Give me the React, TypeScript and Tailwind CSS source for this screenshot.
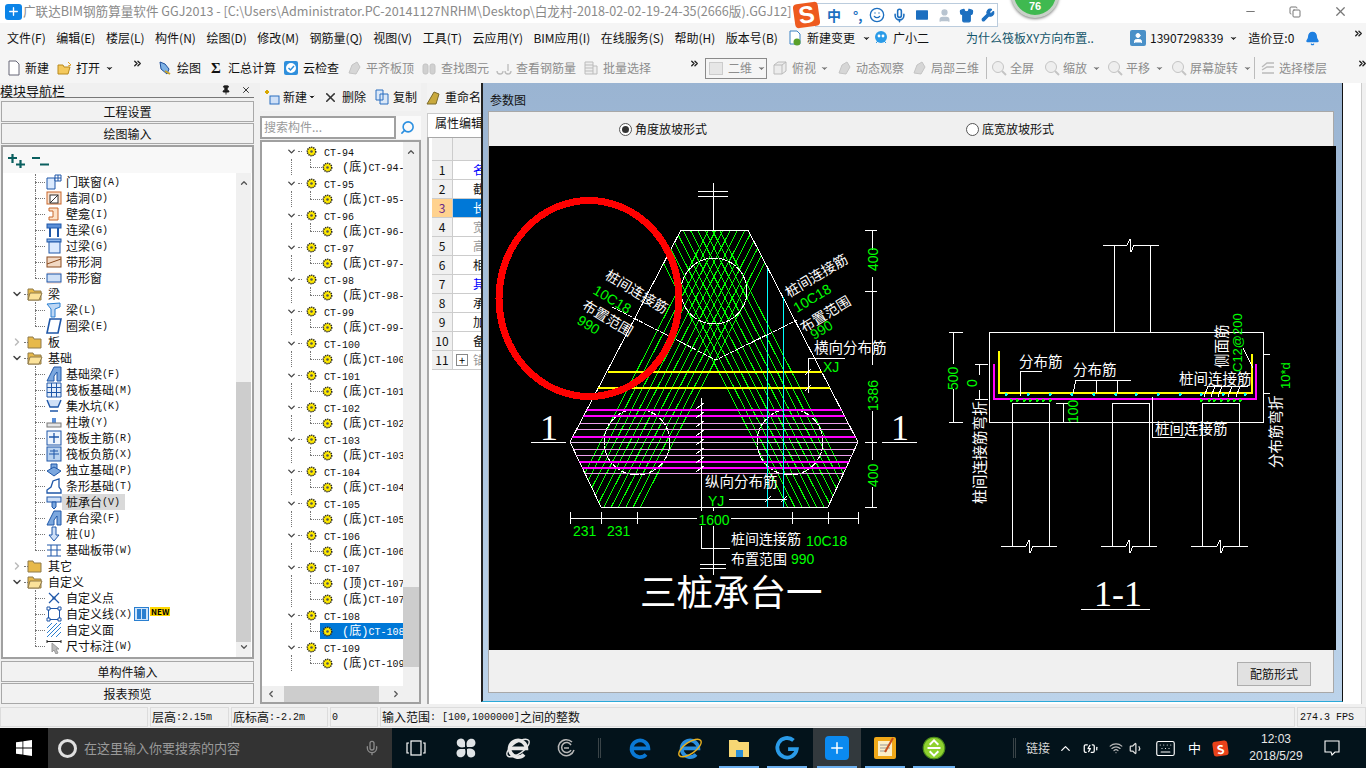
import React from 'react';
import {
  BatteryCharging, Bell, ChevronDown, ChevronRight, ChevronUp, ChevronsRight, Copy, Keyboard, Mic, Minus, Pin, Plus,
  Search, Shirt, Smile, User, Volume1, Wifi, Wrench, X,
} from 'lucide-react';

const UI_FONT = "font-['Noto_Sans_CJK_SC','Liberation_Sans',sans-serif]";

// narrow latin next to 12px hanzi, like the bitmap song face of the app
const Mixed: React.FC<{ text: string }> = ({ text }) => (
  <>
    {text.split(/([\x00-\x7f]+)/).filter(Boolean).map((part, i) =>
      /^[\x00-\x7f]+$/.test(part) ? (
        <span key={i} className="font-['Liberation_Mono',monospace] text-[10px]">{part}</span>
      ) : (
        <span key={i}>{part}</span>
      ),
    )}
  </>
);

const Ico: React.FC<{ children: React.ReactNode; className?: string }> = ({ children, className }) => (
  <svg viewBox="0 0 16 16" width="16" height="16" className={`shrink-0 ${className ?? ''}`}>
    {children}
  </svg>
);

/* ---------- top bars ---------- */

const TitleBar = () => (
  <div className="flex h-[23px] items-center bg-white pl-[5px] text-[12.6px] text-[#8a8a8a]">
    <span className="mr-[1px] flex h-[16px] w-[17px] items-center justify-center rounded-[3px] bg-[#0b84e8]">
      <Plus size={13} color="#fff" strokeWidth={2.5} />
    </span>
    <span className="whitespace-nowrap">
      广联达BIM钢筋算量软件 GGJ2013 - [C:\Users\Administrator.PC-20141127NRHM\Desktop\白龙村-2018-02-02-19-24-35(2666版).GGJ12]
    </span>
    <div className="ml-auto flex items-center gap-[32px] pr-[18px]">
      <Minus size={13} color="#777" />
      <Copy size={12} color="#777" />
      <X size={15} color="#777" />
    </div>
  </div>
);

const menus = ['文件(F)', '编辑(E)', '楼层(L)', '构件(N)', '绘图(D)', '修改(M)', '钢筋量(Q)', '视图(V)', '工具(T)', '云应用(Y)', 'BIM应用(I)', '在线服务(S)', '帮助(H)', '版本号(B)'];

const MenuBar = () => (
  <div className="flex h-[30px] items-center bg-[#f5f5f5] pl-[7px] text-[12px] text-[#111]">
    <div className="flex w-[773px] shrink-0 items-center gap-[10.5px] whitespace-nowrap">
      {menus.map((m) => (
        <span key={m}>{m}</span>
      ))}
    </div>
    <div className="ml-[7px] flex shrink-0 items-center gap-[4px]">
      <Ico>
        <path d="M3 1h7l3 3v10H3z" fill="#fff" stroke="#3b82c4" />
        <circle cx="10" cy="12" r="3.5" fill="#5aa02c" />
      </Ico>
      <span>新建变更</span>
      <ChevronDown size={9} fill="#333" className="ml-[3px]" />
    </div>
    <div className="ml-[2px] flex shrink-0 items-center gap-[4px]">
      <Ico>
        <circle cx="8" cy="7" r="6" fill="#2a9be8" />
        <circle cx="6" cy="6" r="1.4" fill="#fff" />
        <circle cx="10" cy="6" r="1.4" fill="#fff" />
        <path d="M3 13l2-2h6l2 2" stroke="#2a9be8" fill="none" />
      </Ico>
      <span>广小二</span>
    </div>
    <span className="ml-[37px] w-[128px] shrink-0 whitespace-nowrap text-[#14566b]">为什么筏板XY方向布置..</span>
    <div className="ml-[36px] flex shrink-0 items-center">
      <span className="flex h-[16px] w-[16px] items-center justify-center rounded-[2px] bg-[#4a90c8]">
        <User size={12} color="#fff" fill="#fff" />
      </span>
      <span className="ml-[4px]">13907298339</span>
      <ChevronDown size={9} fill="#333" className="ml-[6px]" />
      <span className="ml-[10px]">造价豆:0</span>
      <Bell size={15} color="#1e7fe0" fill="#1e7fe0" className="ml-[11px]" />
      <ChevronsRight size={11} color="#222" strokeWidth={3} className="ml-[33px] -mt-[10px]" />
    </div>
  </div>
);

type Tool = { label: string; icon: React.ReactNode; off?: boolean; drop?: boolean };
const grey = '#c4c4c4';
const GreyBlob = () => (
  <Ico>
    <path d="M3 13l3-8 5-3 3 5-4 7z" fill="#d6d6d6" stroke={grey} />
  </Ico>
);

const tools1: Tool[] = [
  {
    label: '绘图',
    icon: (
      <Ico>
        <path d="M3 2l5 2 4 5-2 5-6-5z" fill="#7fb2e5" stroke="#1f4f9c" />
        <path d="M8 11l5 3" stroke="#c9a227" strokeWidth="2" />
      </Ico>
    ),
  },
  { label: '汇总计算', icon: <span className="w-[16px] text-center font-['Liberation_Serif',serif] text-[15px] font-bold leading-none">Σ</span> },
  {
    label: '云检查',
    icon: (
      <Ico>
        <rect x="1" y="1" width="14" height="14" rx="2" fill="#2f8fdc" />
        <circle cx="8" cy="8" r="5" fill="#fff" />
        <path d="M5.5 8l2 2 3.5-4" stroke="#2f8fdc" strokeWidth="1.5" fill="none" />
      </Ico>
    ),
  },
  { label: '平齐板顶', off: true, icon: <GreyBlob /> },
  {
    label: '查找图元',
    off: true,
    icon: (
      <Ico>
        <rect x="2" y="4" width="5" height="10" rx="2" fill="#d0d0d0" stroke={grey} />
        <rect x="9" y="4" width="5" height="10" rx="2" fill="#d0d0d0" stroke={grey} />
      </Ico>
    ),
  },
  {
    label: '查看钢筋量',
    off: true,
    icon: (
      <Ico>
        <path d="M1 11a3 3 0 006 0M9 11a3 3 0 006 0M12 4v7" stroke="#bbb" fill="none" strokeWidth="1.3" />
      </Ico>
    ),
  },
  {
    label: '批量选择',
    off: true,
    icon: (
      <Ico>
        <path d="M2 2h8v12H2zM2 5h8M2 8h8M2 11h8M10 6h4v8h-4" stroke="#bbb" fill="#eee" />
      </Ico>
    ),
  },
];

const tools2: Tool[] = [
  {
    label: '俯视',
    off: true,
    drop: true,
    icon: (
      <Ico>
        <path d="M2 5l4-3h8v9l-4 3H2zM2 5h8v9M10 5l4-3" stroke="#bbb" fill="#ececec" />
      </Ico>
    ),
  },
  { label: '动态观察', off: true, icon: <GreyBlob /> },
  { label: '局部三维', off: true, icon: <GreyBlob /> },
];

const ToolItem: React.FC<{ t: Tool }> = ({ t }) => (
  <div className={`flex shrink-0 items-center gap-[4px] whitespace-nowrap ${t.off ? 'text-[#8d8d8d]' : 'text-[#111]'}`}>
    {t.icon}
    <span>{t.label}</span>
    {t.drop && <ChevronDown size={9} fill="#777" color="#777" />}
  </div>
);

const CircleTool: React.FC<{ label: string; drop?: boolean; className?: string }> = ({ label, drop, className }) => (
  <div className={`flex shrink-0 items-center gap-[3px] whitespace-nowrap text-[#8d8d8d] ${className ?? ''}`}>
    <Ico>
      <circle cx="7" cy="7" r="5.5" fill="#eee" stroke={grey} />
      <path d="M11 11l4 4" stroke={grey} strokeWidth="2" />
    </Ico>
    <span>{label}</span>
    {drop && <ChevronDown size={9} fill="#777" color="#777" className="ml-[2px]" />}
  </div>
);

const Sep = () => <span className="block h-[22px] w-px shrink-0 bg-[#bcbcbc]" />;
const More = ({ className }: { className?: string }) => (
  <ChevronsRight size={11} color="#222" strokeWidth={3} className={`-mt-[10px] shrink-0 ${className ?? ''}`} />
);

const ToolBar = () => (
  <div className="flex h-[30px] items-center bg-[#f5f5f5] pl-[6px] text-[12px]">
    <div className="flex w-[137px] shrink-0 items-center">
      <Ico>
        <path d="M3 1h7l3 3v11H3z" fill="#fff" stroke="#667" />
      </Ico>
      <span className="ml-[3px]">新建</span>
      <Ico className="ml-[8px]">
        <path d="M1 5h5l1 2h6l-2 7H1z" fill="#f4c95d" stroke="#b98a1e" />
        <path d="M11 2l3 3-3 1" stroke="#e0a020" fill="none" />
      </Ico>
      <span className="ml-[3px]">打开</span>
      <ChevronDown size={9} fill="#333" className="ml-[5px]" />
      <More className="ml-auto" />
    </div>
    <div className="ml-[14px] flex w-[532px] shrink-0 items-center gap-[7px]">
      {tools1.map((t) => (
        <ToolItem key={t.label} t={t} />
      ))}
    </div>
    <More />
    <div className="ml-[5px] flex h-[21px] w-[62px] shrink-0 items-center whitespace-nowrap border border-[#8a8a8a] pl-[3px] text-[#8d8d8d]">
      <span className="h-[13px] w-[14px] shrink-0 border border-[#ccc] bg-[#e6e6e6]" />
      <span className="ml-[5px]">二维</span>
      <ChevronDown size={9} fill="#777" color="#777" className="ml-[5px] shrink-0" />
    </div>
    <div className="ml-[5px] flex shrink-0 items-center gap-[7px]">
      {tools2.map((t) => (
        <ToolItem key={t.label} t={t} />
      ))}
      <Sep />
    </div>
    <CircleTool label="全屏" className="ml-[4px]" />
    <CircleTool label="缩放" drop className="ml-[10px]" />
    <CircleTool label="平移" drop className="ml-[6px]" />
    <CircleTool label="屏幕旋转" drop className="ml-[7px]" />
    <span className="ml-[2px]">
      <Sep />
    </span>
    <div className="ml-[5px] flex shrink-0 items-center gap-[3px] whitespace-nowrap text-[#8d8d8d]">
      <Ico>
        <path d="M2 7l5-4h7M2 10l5-3h7M2 13h12" stroke="#bbb" fill="none" strokeWidth="1.4" />
      </Ico>
      <span>选择楼层</span>
    </div>
    <More className="ml-[30px]" />
  </div>
);

/* ---------- module tree ---------- */

const NavIcon: React.FC<{ kind: string }> = ({ kind }) => {
  const b = '#1f57a8';
  const o = '#c8662a';
  switch (kind) {
    case 'door':
      return <Ico><path d="M1 4h8v11H1z" fill="#dbeafe" stroke={b} /><path d="M9 1h6v6H9zM12 1v6M9 4h6" stroke={b} fill="#fff" /></Ico>;
    case 'hole':
      return <Ico><rect x="1" y="2" width="14" height="12" fill="#fbe3d0" stroke={o} /><rect x="4" y="5" width="8" height="8" fill="#fff" stroke="#333" /><path d="M4 13l8-8" stroke="#333" /></Ico>;
    case 'niche':
      return <Ico><path d="M3 2h9v12H3v-3h4V5H3z" fill="#fde2c8" stroke={o} /></Ico>;
    case 'lintel':
      return <Ico><rect x="1" y="2" width="14" height="4" fill="#5b8fd8" stroke={b} /><path d="M4 6v9M12 6v9" stroke={b} strokeWidth="2" /></Ico>;
    case 'over':
      return <Ico><rect x="1" y="1" width="14" height="3" fill="#8db6ea" stroke={b} /><rect x="3" y="4" width="11" height="11" fill="#dbeafe" stroke={b} /></Ico>;
    case 'band':
      return <Ico><rect x="1" y="3" width="14" height="10" fill="#f2d9c4" stroke="#8a4a1e" /><path d="M1 10l14-5" stroke="#8a4a1e" /></Ico>;
    case 'bandw':
      return <Ico><rect x="1" y="2" width="14" height="12" fill="#fde7dc" /><rect x="1" y="4" width="14" height="8" fill="#cfe0f7" stroke={b} /></Ico>;
    case 'beam':
      return <Ico><path d="M1 2l13-1v4L9 7v8H5V7z" fill="#bcd6f4" stroke="#2a7fd0" /></Ico>;
    case 'ring':
      return <Ico><path d="M4 1h11l-3 14H1z" fill="#fff" stroke={b} strokeWidth="1.6" /></Ico>;
    case 'fbeam':
      return <Ico><path d="M1 15l3-6 4-8h7v14h-4V6L8 10v5z" fill="#7ba7de" stroke={b} /></Ico>;
    case 'raft':
      return <Ico><path d="M1 1h14v14H1zM1 5.5h14M1 10.5h14M5.5 1v14M10.5 1v14" stroke={b} fill="#e2edfb" /></Ico>;
    case 'sump':
      return <Ico><path d="M1 2l3 7h8l3-7M4 13h8" stroke={b} fill="#cfe0f7" strokeWidth="1.4" /></Ico>;
    case 'pier':
      return <Ico><path d="M6 4h4v5H6z" fill="#5b8fd8" /><rect x="1" y="9" width="14" height="4" fill="#e5e5e5" stroke="#777" /></Ico>;
    case 'main':
      return <Ico><rect x="1" y="1" width="14" height="14" fill="#eef4fc" stroke={b} /><path d="M3 7h10M8 3v10" stroke={b} strokeWidth="1.3" /></Ico>;
    case 'neg':
      return <Ico><rect x="1" y="1" width="14" height="14" fill="#b9d2f0" stroke={b} /><path d="M3 8h10M8 3v10M4 5h8" stroke={b} /></Ico>;
    case 'iso':
      return <Ico><path d="M1 9l7-4 7 4-7 5zM5 7V2h6v5" fill="#7ba7de" stroke={b} /></Ico>;
    case 'strip':
      return <Ico><path d="M1 15v-3l4-3 2-6 6-2v8l2 3v3z" fill="#fff" stroke={b} strokeWidth="1.3" /></Ico>;
    case 'cap':
      return <Ico><rect x="1" y="3" width="14" height="5" fill="#cfe0f7" stroke={b} /><path d="M6 8h4v5l-2 2-2-2z" fill="#7ba7de" stroke={b} /></Ico>;
    case 'pile':
      return <Ico><path d="M6 1h4v8h3l-5 6-5-6h3z" fill="#cfe0f7" stroke={b} /></Ico>;
    case 'plate':
      return <Ico><path d="M1 3h14M1 14h14M5 3v11M11 3v11M1 8h14" stroke={b} fill="none" /></Ico>;
    case 'point':
      return <Ico><path d="M3 3l10 10M13 3L3 13" stroke={b} strokeWidth="1.2" /><circle cx="8" cy="8" r="1.6" fill={b} /></Ico>;
    case 'line':
      return <Ico><rect x="2.5" y="2.5" width="11" height="11" fill="none" stroke={b} /><path d="M1 1h3v3H1zM12 1h3v3h-3zM1 12h3v3H1zM12 12h3v3h-3z" fill="#fff" stroke={b} /></Ico>;
    case 'face':
      return <Ico><path d="M1 6l5-5M1 11L11 1M1 15L15 1M5 15L15 5M10 15l5-5" stroke="#2a7fd0" /></Ico>;
    default:
      return <Ico><path d="M1 2v3M15 2v3M1 3.5h14" stroke="#222" /><path d="M6 5l7 6-3 0 2 4-2 1-2-4-2 2z" fill="#bbb" stroke="#999" /></Ico>;
  }
};

const Folder: React.FC<{ open?: boolean }> = ({ open }) => (
  <Ico>
    <path d="M1 3h5l1 2h7v9H1z" fill="#e7b94a" stroke="#8f7a4a" />
    {open && <path d="M3 7h12l-3 7H1z" fill="#fbe29a" stroke="#8f7a4a" />}
  </Ico>
);

type NavRow = { label: string; icon?: string; group?: 'open' | 'closed'; last?: boolean; hot?: boolean; isNew?: boolean };
const navRows: NavRow[] = [
  { label: '门联窗(A)', icon: 'door' },
  { label: '墙洞(D)', icon: 'hole' },
  { label: '壁龛(I)', icon: 'niche' },
  { label: '连梁(G)', icon: 'lintel' },
  { label: '过梁(G)', icon: 'over' },
  { label: '带形洞', icon: 'band' },
  { label: '带形窗', icon: 'bandw', last: true },
  { label: '梁', group: 'open' },
  { label: '梁(L)', icon: 'beam' },
  { label: '圈梁(E)', icon: 'ring', last: true },
  { label: '板', group: 'closed' },
  { label: '基础', group: 'open' },
  { label: '基础梁(F)', icon: 'fbeam' },
  { label: '筏板基础(M)', icon: 'raft' },
  { label: '集水坑(K)', icon: 'sump' },
  { label: '柱墩(Y)', icon: 'pier' },
  { label: '筏板主筋(R)', icon: 'main' },
  { label: '筏板负筋(X)', icon: 'neg' },
  { label: '独立基础(P)', icon: 'iso' },
  { label: '条形基础(T)', icon: 'strip' },
  { label: '桩承台(V)', icon: 'cap', hot: true },
  { label: '承台梁(F)', icon: 'fbeam' },
  { label: '桩(U)', icon: 'pile' },
  { label: '基础板带(W)', icon: 'plate', last: true },
  { label: '其它', group: 'closed' },
  { label: '自定义', group: 'open' },
  { label: '自定义点', icon: 'point' },
  { label: '自定义线(X)', icon: 'line', isNew: true },
  { label: '自定义面', icon: 'face' },
  { label: '尺寸标注(W)', icon: 'dim', last: true },
];

const Dots = ({ className }: { className: string }) => <span className={`absolute border-dotted border-[#777] ${className}`} />;

const NavTree = () => (
  <div className="relative flex min-h-0 flex-1 border-2 border-[#a0a0a0] border-t-0 bg-white">
    <div className="min-w-0 flex-1 pt-[1px]">
      {navRows.map((r) =>
        r.group ? (
          <div key={r.label} className="relative flex h-[16px] items-center pl-[8px] text-[12px]">
            {r.group === 'open' ? <ChevronDown size={12} color="#444" strokeWidth={3} /> : <ChevronRight size={12} color="#bbb" strokeWidth={3} />}
            <Dots className="left-[21px] top-[8px] w-[4px] border-t" />
            <span className="ml-[4px]"><Folder open={r.group === 'open'} /></span>
            <span className="ml-[5px]">{r.label}</span>
          </div>
        ) : (
          <div key={r.label} className="relative flex h-[16px] items-center pl-[43px] text-[12px]">
            <Dots className={`left-[32px] top-0 border-l ${r.last ? 'h-[8px]' : 'h-[16px]'}`} />
            <Dots className="left-[32px] top-[8px] w-[10px] border-t" />
            <NavIcon kind={r.icon ?? ''} />
            <span className={`flex h-[16px] items-center whitespace-nowrap pl-[4px] pr-[5px] ${r.hot ? 'bg-[#d9d9d9]' : ''}`}>
              <Mixed text={r.label} />
            </span>
            {r.isNew && (
              <>
                <span className="-ml-[3px] flex h-[14px] w-[15px] items-center justify-around border border-[#2a7fd0] bg-[#cfe4fa] px-[1px]">
                  <span className="h-[10px] w-[4px] bg-[#2a7fd0]" />
                  <span className="h-[10px] w-[4px] bg-[#2a7fd0]" />
                </span>
                <span className="-mt-[5px] ml-[1px] bg-[#ffd800] px-[1px] text-[8px] font-bold leading-[9px] text-black">NEW</span>
              </>
            )}
          </div>
        ),
      )}
    </div>
    <div className="mr-[1px] flex w-[15px] flex-col items-center bg-[#f0f0f0]">
      <ChevronUp size={10} strokeWidth={3} color="#555" className="my-[5px]" />
      <div className="mt-[189px] h-[260px] w-full bg-[#cdcdcd]" />
      <ChevronDown size={10} strokeWidth={3} color="#555" className="mb-[5px] mt-auto" />
    </div>
  </div>
);

const PanelButton: React.FC<{ label: string }> = ({ label }) => (
  <div className="flex h-[21px] items-center justify-center border border-[#a8a8a8] bg-[#f2f2f2] text-[12px] text-[#111]">{label}</div>
);

const NavPanel = () => (
  <div className="ml-[1px] flex w-[253px] shrink-0 flex-col">
    <div className="flex h-[15px] items-center border-b border-[#777] text-[13px] leading-none">
      <span className="-ml-[1px]">模块导航栏</span>
      <Pin size={10} className="ml-auto" fill="#222" />
      <X size={10} className="ml-[10px] mr-[3px]" />
    </div>
    <div className="mt-[3px] flex flex-col gap-px">
      <PanelButton label="工程设置" />
      <PanelButton label="绘图输入" />
    </div>
    <div className="mt-[1px] flex h-[28px] items-center gap-[7px] border-x-2 border-t-2 border-[#a0a0a0] bg-[#f8f8f8] pl-[5px] pt-[2px]">
      <svg viewBox="0 0 17 14" width="17" height="14">
        <path d="M0 4h9M4.5 0v9M8 10.5h9M12.5 6v8" stroke="#0a5f5f" strokeWidth="2.2" />
      </svg>
      <svg viewBox="0 0 17 14" width="17" height="14">
        <path d="M0 4h8M8 10.5h9" stroke="#0a5f5f" strokeWidth="2.2" />
      </svg>
    </div>
    <NavTree />
    <div className="mt-[2px] flex flex-col gap-px">
      <PanelButton label="单构件输入" />
      <PanelButton label="报表预览" />
    </div>
  </div>
);

/* ---------- component list ---------- */

const Gear = () => (
  <svg viewBox="0 0 12 12" width="11" height="11" className="shrink-0">
    <circle cx="6" cy="6" r="4.6" fill="#ffea00" stroke="#222" strokeWidth="1.6" strokeDasharray="1.4 0.9" />
    <circle cx="6" cy="6" r="1.4" fill="#555" />
  </svg>
);

const ctRows: { name: string; sub: string[] }[] = [94, 95, 96, 97, 98, 99, 100, 101, 102, 103, 104, 105, 106, 107, 108, 109].map((n) => ({
  name: `CT-${n}`,
  sub: n === 107 ? [`(顶)CT-${n}`, `(底)CT-${n}`] : [`(底)CT-${n}${n < 100 ? '-' : ''}`],
}));

const CtList = () => (
  <div className="relative flex min-h-0 flex-1 overflow-hidden border-2 border-[#a0a0a0] bg-white">
    <div className="min-w-0 flex-1 overflow-hidden pt-[1px]">
      {ctRows.map((c) => (
        <React.Fragment key={c.name}>
          <div className="relative flex h-[16px] items-center pl-[24px]">
            <ChevronDown size={11} strokeWidth={3} color="#444" />
            <Dots className="left-[36px] top-[8px] w-[4px] border-t" />
            <span className="ml-[9px]"><Gear /></span>
            <span className="ml-[7px] whitespace-nowrap"><Mixed text={c.name} /></span>
          </div>
          {c.sub.map((s) => (
            <div key={s} className="relative flex h-[16px] items-center pl-[58px]">
              <Dots className="left-[29px] top-0 h-[16px] border-l" />
              <Dots className="left-[48px] top-0 h-[8px] border-l" />
              <Dots className="left-[48px] top-[8px] w-[12px] border-t" />
              <div className={`flex h-[16px] w-[83px] items-center overflow-hidden whitespace-nowrap pl-[2px] ${s === '(底)CT-108' ? 'bg-[#0078d7] text-white' : ''}`}>
                <Gear />
                <span className="ml-[9px]">
                  <span className="font-['Liberation_Mono','Noto_Sans_CJK_SC',monospace] text-[12px]">(</span>
                  {s.slice(1, 2)}
                  <span className="font-['Liberation_Mono','Noto_Sans_CJK_SC',monospace] text-[12px]">)</span>
                  <Mixed text={s.slice(3)} />
                </span>
              </div>
            </div>
          ))}
        </React.Fragment>
      ))}
    </div>
    <div className="absolute right-0 top-0 flex h-[545px] w-[16px] flex-col items-center bg-[#f0f0f0]">
      <ChevronUp size={10} strokeWidth={3} color="#555" className="mt-[5px]" />
      <div className="mt-[430px] h-[80px] w-full bg-[#cdcdcd]" />
    </div>
    <div className="absolute bottom-0 left-0 flex h-[16px] w-full items-center bg-[#f0f0f0] pl-[4px]">
      <ChevronRight size={10} strokeWidth={3} color="#555" className="rotate-180" />
      <div className="ml-[8px] h-full w-[95px] bg-[#cdcdcd]" />
      <ChevronRight size={10} strokeWidth={3} color="#555" className="ml-auto mr-[18px]" />
    </div>
  </div>
);

const CtPanel = () => (
  <div className="relative z-10 ml-[6px] flex w-[161px] shrink-0 flex-col text-[12px]">
    <div className="flex h-[28px] items-center whitespace-nowrap bg-[#f3f3f3] pl-[4px]">
      <Ico>
        <path d="M1 3h4M3 1v4" stroke="#d8a800" strokeWidth="2" />
        <rect x="6" y="7" width="9" height="8" fill="#cfe0f7" stroke="#2a6fc0" />
      </Ico>
      <span className="ml-[3px]">新建</span>
      <ChevronDown size={8} fill="#222" className="ml-[1px] shrink-0" />
      <X size={15} strokeWidth={2.5} color="#333" className="ml-[7px] shrink-0" />
      <span className="ml-[4px]">删除</span>
      <Ico className="ml-[8px]">
        <path d="M2 1h7v10H2zM6 5h8v10H6z" fill="#dbe8f8" stroke="#2a6fc0" />
      </Ico>
      <span className="ml-[3px]">复制</span>
      <Ico className="ml-[8px]">
        <path d="M2 15l7-12 5 2-3 10z" fill="#c9a93d" stroke="#7a6a2a" />
      </Ico>
      <span className="ml-[4px]">重命名</span>
    </div>
    <div className="mt-[3px] flex h-[26px] items-center">
      <div className="flex h-[23px] w-[136px] items-center border-2 border-[#a0a0a0] bg-white pl-[2px] text-[#9a9a9a]">搜索构件...</div>
      <div className="flex h-[23px] flex-1 items-center justify-center bg-[#fafafa]">
        <Search size={15} color="#2a8fe0" strokeWidth={2.5} className="mr-[3px] -scale-x-100" />
      </div>
    </div>
    <CtList />
  </div>
);

/* ---------- property grid (mostly under the dialog) ---------- */

const props: { n: number; t: string; c?: string; on?: boolean; plus?: boolean }[] = [
  { n: 1, t: '名', c: 'text-[#0000ff]' },
  { n: 2, t: '截' },
  { n: 3, t: '长', on: true },
  { n: 4, t: '宽', c: 'text-[#999]' },
  { n: 5, t: '高', c: 'text-[#999]' },
  { n: 6, t: '相' },
  { n: 7, t: '其', c: 'text-[#0000ff]' },
  { n: 8, t: '承' },
  { n: 9, t: '加' },
  { n: 10, t: '备' },
  { n: 11, t: '锚', c: 'text-[#999]', plus: true },
];

const PropPanel = () => (
  <div className="ml-[6px] mr-[4px] flex min-w-0 flex-1 flex-col border-r border-[#ccc] bg-white">
    <div className="h-[30px] w-[60px] bg-[#f3f3f3]" />
    <div className="flex h-[24px] w-[70px] items-start border-l border-t border-[#ccc] bg-white pl-[7px] text-[12px]">属性编辑</div>
    <div className="w-[850px] flex-1 border-l-2 border-t border-[#a8a8a8] bg-white pl-[3px]">
      <div className="flex h-[23px] border-b border-[#ccc] bg-[#f0f0f0]">
        <span className="w-[21px] border-r border-[#ccc]" />
      </div>
      {props.map((p) => (
        <div key={p.n} className="flex h-[19px] border-b border-[#ccc] text-[12px]">
          <span className={`flex w-[21px] items-center justify-center border-r border-[#ccc] ${p.on ? 'bg-[#ffd28f] text-[#6a2a8a]' : 'bg-[#f0f0f0]'}`}>
            {p.n}
          </span>
          <span className={`flex flex-1 items-center pl-[20px] ${p.on ? 'bg-[#0078d7] text-white' : p.c ?? ''}`}>
            {p.plus && <span className="-ml-[17px] mr-[5px] flex h-[12px] w-[12px] items-center justify-center border border-[#888] text-[11px] text-black">+</span>}
            {p.t}
          </span>
        </div>
      ))}
    </div>
  </div>
);

/* ---------- CAD drawing, coordinates are screen pixels ---------- */

const W = '#ffffff';
const G = '#00ff00';

const Cad: React.FC<{ x: number; y: number; size?: number; fill?: string; rot?: number; anchor?: 'start' | 'middle' | 'end'; serif?: boolean; children: string }> = ({
  x, y, size = 14, fill = W, rot, anchor = 'start', serif, children,
}) => (
  <text
    x={x}
    y={y}
    fontSize={size}
    fill={fill}
    textAnchor={anchor}
    fontFamily={
      serif ? "'Liberation Serif',serif" : fill === G ? "'Liberation Sans',sans-serif" : "'Noto Sans CJK SC','Liberation Sans',sans-serif"
    }
    transform={rot ? `rotate(${rot} ${x} ${y})` : undefined}
  >
    {children}
  </text>
);

const Break: React.FC<{ x1: number; x2: number; y: number; at: number }> = ({ x1, x2, y, at }) => (
  <path d={`M${x1} ${y}H${at - 3}L${at} ${y - 6}L${at + 1} ${y + 7}L${at + 4} ${y}H${x2}`} fill="none" stroke={W} />
);

const hatch = Array.from({ length: 11 }, (_, i) => -36.5 + i * 7.3);
const HEX = '681,230 748,230 858,442 828,507 601,507 570,442';

const PileCapDrawing = () => (
  <svg viewBox="489 146 847 504" width="847" height="504" className="block" shapeRendering="crispEdges">
    <defs>
      <clipPath id="hex">
        <polygon points={HEX} />
      </clipPath>
    </defs>
    <rect x="489" y="146" width="847" height="504" fill="#000" />

    {/* plan: strips */}
    <g clipPath="url(#hex)" stroke={G} strokeWidth="1">
      {hatch.map((o) => (
        <React.Fragment key={o}>
          <line x1={745 + o} y1={230} x2={604 + o} y2={507} />
          <line x1={683 - o} y1={230} x2={824 - o} y2={507} />
        </React.Fragment>
      ))}
    </g>
    <polygon points={HEX} fill="none" stroke={W} />
    <g fill="none" stroke={W} strokeDasharray="9 1">
      <circle cx="714" cy="291" r="33" />
      <circle cx="637" cy="442" r="33" />
      <circle cx="790" cy="442" r="33" />
    </g>

    {/* distribution bars */}
    <g clipPath="url(#hex)" strokeWidth="1.5" stroke="#ff00ff">
      {[410, 416, 437, 462, 468].map((y) => (
        <line key={y} x1="560" x2="870" y1={y} y2={y} />
      ))}
      {[423, 429, 449, 455, 473].map((y) => (
        <line key={y} x1="560" x2="870" y1={y} y2={y} strokeWidth="1" stroke="#f0a0f0" />
      ))}
      <line x1="560" x2="870" y1="442" y2="442" strokeWidth="1" stroke="#e8c0f0" />
    </g>
    <path d="M608 372H822M598 388H830" stroke="#ffff00" strokeWidth="1.5" />
    <path d="M767.5 269V507M783.5 297V507" stroke="#00ffff" strokeWidth="1" />

    {/* leaders */}
    <path d="M612 307L716 360L797 320" fill="none" stroke={W} strokeDasharray="5 1" />
    <path d="M713 183V230M698 191H728M698 196H728" fill="none" stroke={W} />
    <path d="M701 398V511M701 526V548H730M713 507V511M713 526V575M700 564H726M700 568H726" fill="none" stroke={W} />
    <g stroke={W}>
      {[406, 415, 424, 433, 442, 451, 460, 469].map((y) => (
        <line key={y} x1="696" y1={y + 3} x2="704" y2={y - 3} />
      ))}
      <line x1="765" y1="502" x2="771" y2="496" />
      <line x1="781" y1="502" x2="787" y2="496" />
      <line x1="805" y1="375" x2="811" y2="369" />
      <line x1="805" y1="391" x2="811" y2="385" />
    </g>
    <path d="M729 499H787M845 358H808V393" fill="none" stroke={W} />

    {/* dimensions */}
    <path d="M872 230V250M872 277V365M872 411V460M872 487V507M865 230H877M865 291H877M865 442H877M865 507H877" fill="none" stroke={W} />
    <path d="M570 518H697M731 518H858" fill="none" stroke={W} />
    {[570, 601, 637, 792, 828, 858].map((x) => (
      <line key={x} x1={x} x2={x} y1="512" y2="524" stroke={W} />
    ))}
    <path d="M531 442H566M882 442H917" stroke={W} />

    <Cad x={878} y={271} size={14} fill={G} rot={-90}>400</Cad>
    <Cad x={878} y={411} size={14} fill={G} rot={-90}>1386</Cad>
    <Cad x={878} y={487} size={14} fill={G} rot={-90}>400</Cad>
    <Cad x={714} y={525} fill={G} anchor="middle">1600</Cad>
    <Cad x={573} y={536} fill={G}>231</Cad>
    <Cad x={607} y={536} fill={G}>231</Cad>
    <Cad x={549} y={440} size={36} serif anchor="middle">1</Cad>
    <Cad x={900} y={440} size={36} serif anchor="middle">1</Cad>

    <Cad x={604} y={278} rot={31}>桩间连接筋</Cad>
    <Cad x={592} y={293} fill={G} rot={31}>10C18</Cad>
    <Cad x={581} y={308} rot={31}>布置范围</Cad>
    <Cad x={576} y={323} fill={G} rot={31}>990</Cad>
    <Cad x={789} y={298} rot={-31}>桩间连接筋</Cad>
    <Cad x={797} y={313} fill={G} rot={-31}>10C18</Cad>
    <Cad x={804} y={333} rot={-31}>布置范围</Cad>
    <Cad x={814} y={340} fill={G} rot={-31}>990</Cad>
    <Cad x={814} y={353} size={14.5}>横向分布筋</Cad>
    <Cad x={823} y={372} fill={G}>XJ</Cad>
    <Cad x={705} y={487} size={14.5}>纵向分布筋</Cad>
    <Cad x={708} y={506} fill={G}>YJ</Cad>
    <Cad x={731} y={544} size={14}>桩间连接筋</Cad>
    <Cad x={806} y={546} fill={G}>10C18</Cad>
    <Cad x={731} y={564} size={14}>布置范围</Cad>
    <Cad x={791} y={564} fill={G}>990</Cad>
    <Cad x={640} y={606} size={36.5}>三桩承台一</Cad>

    {/* section 1-1 */}
    <rect x="989" y="332" width="274" height="90" fill="none" stroke={W} />
    <path d="M1114 245V332M1150 245V332" stroke={W} />
    <Break x1={1103} x2={1159} y={245} at={1130} />
    {[[1012, 1049, 1001, 1057, 1029], [1112, 1149, 1101, 1157, 1129], [1202, 1239, 1191, 1248, 1220]].map(([a, b, c, d, e]) => (
      <React.Fragment key={a}>
        <path d={`M${a} 546V403H${b}V546`} fill="none" stroke={W} />
        <Break x1={c} x2={d} y={546} at={e} />
      </React.Fragment>
    ))}
    <path d="M999 351V393H1252V354" fill="none" stroke="#ffff00" strokeWidth="2" />
    <path d="M994 364V399H1256V364" fill="none" stroke="#ff00ff" strokeWidth="2" />
    {[229, 295, 361, 425, 491, 557, 619, 685, 751, 814, 880, 946].map((z) => (
      <circle key={z} cx={930 + z / 3} cy="394.5" r="1.4" fill="#00ffff" />
    ))}
    {[244, 262, 283, 301, 322, 340, 361, 814, 838, 853, 874, 895, 913, 931].map((z) => (
      <circle key={z} cx={930 + z / 3} cy="400.5" r="1.4" fill={G} />
    ))}
    <path d="M953 332V364M953 389V422M949 332H963M949 422H963M979 364V375M979 390V399M975 364H988M975 399H988M1063 403V422M1056 403H1068M1056 422H1068" fill="none" stroke={W} />
    <path d="M1020 396V371H1042M1073 393L1076 380H1131M1096 380V393M1118 380L1117 393M1152 397V437H1185" fill="none" stroke={W} />
    <path d="M1208 386H1248M1208 386L1204 397M1215 386L1211 397M1222 386L1218 397M1232 386L1228 397M1240 386L1236 397" fill="none" stroke={W} />
    <path d="M1243 348L1253 368M1263 354H1270M1263 393H1270" fill="none" stroke={W} />
    <Cad x={958} y={390} fill={G} rot={-90}>500</Cad>
    <Cad x={977} y={387} fill={G} rot={-90}>0</Cad>
    <Cad x={1078} y={423} fill={G} rot={-90}>100</Cad>
    <Cad x={1019} y={367} size={14.5}>分布筋</Cad>
    <Cad x={1073} y={375} size={14.5}>分布筋</Cad>
    <Cad x={1179} y={384} size={14.5}>桩间连接筋</Cad>
    <Cad x={1155} y={434} size={14.5}>桩间连接筋</Cad>
    <Cad x={985} y={504} size={14.7} rot={-90}>桩间连接筋弯折</Cad>
    <Cad x={1227} y={368} size={14.5} rot={-90}>侧面筋</Cad>
    <Cad x={1242} y={372} size={13} fill={G} rot={-90}>C12@200</Cad>
    <Cad x={1281} y={468} size={14.5} rot={-90}>分布筋弯折</Cad>
    <Cad x={1290} y={389} size={13} fill={G} rot={-90}>10*d</Cad>
    <Cad x={1118} y={606} size={36} serif anchor="middle">1-1</Cad>
    <path d="M1081 609H1150" stroke={W} />

    {/* red hand marking */}
    <ellipse cx="589" cy="298.5" rx="90" ry="98" fill="none" stroke="#ff0000" strokeWidth="7" />
  </svg>
);

const Radio: React.FC<{ on?: boolean; label: string }> = ({ on, label }) => (
  <div className="flex items-center gap-[3px]">
    <span className="flex h-[13px] w-[13px] items-center justify-center rounded-full border border-[#555] bg-white">
      {on && <span className="h-[7px] w-[7px] rounded-full bg-[#333]" />}
    </span>
    <span>{label}</span>
  </div>
);

const ParamDialog = () => (
  <div className="absolute left-[481px] top-[83px] z-20 flex h-[619px] w-[862px] flex-col border-b border-l-2 border-r border-[#222] border-b-[#2aa9d8] border-r-[#111] bg-gradient-to-b from-[#9ab4d2] to-[#bcd3ea] pb-[8px] pl-[5px] pr-[8px] text-[12px]">
    <div className="flex h-[28px] items-center pl-[2px] pt-[6px] text-[#111]">参数图</div>
    <div className="flex min-h-0 flex-1 flex-col border border-[#a8a8a8] bg-[#f0f0f0]">
      <div className="flex h-[34px] shrink-0 items-center pl-[130px]">
        <Radio on label="角度放坡形式" />
        <span className="ml-[259px]">
          <Radio label="底宽放坡形式" />
        </span>
      </div>
      <PileCapDrawing />
      <div className="flex flex-1 items-start justify-end pr-[22px] pt-[12px]">
        <div className="flex h-[24px] w-[74px] items-center justify-center border border-[#adadad] bg-[#e1e1e1]">配筋形式</div>
      </div>
    </div>
  </div>
);

/* ---------- status + taskbar ---------- */

const Cell: React.FC<{ className: string; children?: React.ReactNode }> = ({ className, children }) => (
  <div className={`flex items-center whitespace-nowrap border border-[#dcdcdc] pl-[1px] ${className}`}>{children}</div>
);

const StatusBar = () => (
  <div className="flex h-[22px] gap-[2px] bg-[#f0f0f0] py-[1px] text-[12px] text-[#111]">
    <Cell className="w-[148px]" />
    <Cell className="w-[79px]"><Mixed text="层高:2.15m" /></Cell>
    <Cell className="w-[97px]"><Mixed text="底标高:-2.2m" /></Cell>
    <Cell className="w-[48px]"><Mixed text="0" /></Cell>
    <Cell className="flex-1"><Mixed text="输入范围: [100,1000000]" /><span>之间的整数</span></Cell>
    <Cell className="w-[69px] pl-[2px]"><Mixed text="274.3 FPS" /></Cell>
  </div>
);

const TaskSlot: React.FC<{ w: string; active?: boolean; bar?: boolean; children: React.ReactNode }> = ({ w, active, bar, children }) => (
  <div className={`relative flex h-full shrink-0 items-center justify-center ${w} ${active ? 'bg-[#32393d]' : ''}`}>
    {children}
    {bar && <span className="absolute bottom-0 left-[4px] right-[4px] h-[2px] bg-[#6cb0f0]" />}
  </div>
);

const ELogo: React.FC<{ color: string; ring?: string }> = ({ color, ring }) => (
  <svg viewBox="0 0 30 30" width="28" height="28" fill="none">
    <path d="M6.5 15.5H24A9 9 0 1 0 21.5 22" stroke={color} strokeWidth="4" />
    {ring && <ellipse cx="15" cy="15" rx="14" ry="6" transform="rotate(-35 15 15)" stroke={ring} strokeWidth="1.5" />}
  </svg>
);

const TaskBar = () => (
  <div className="flex h-[40px] items-center bg-[#03131b] text-white">
    <div className="flex h-full w-[48px] shrink-0 items-center justify-center bg-black">
      <svg viewBox="0 0 16 16" width="16" height="16">
        <path d="M0 2.3l6.5-.9v6.2H0zM7.3 1.3L16 0v7.6H7.3zM0 8.4h6.5v6.2L0 13.7zM7.3 8.4H16V16l-8.7-1.3z" fill="#fff" />
      </svg>
    </div>
    <div className="flex h-full w-[344px] shrink-0 items-center bg-[#333] pl-[10px] text-[13px] text-[#9a9a9a]">
      <span className="h-[19px] w-[19px] rounded-full border-[3px] border-[#e0e0e0]" />
      <span className="ml-[7px]">在这里输入你要搜索的内容</span>
      <Mic size={16} color="#8a8a8a" className="ml-auto mr-[12px]" />
    </div>
    <TaskSlot w="w-[48px]">
      <svg viewBox="0 0 20 16" width="20" height="16" fill="none" stroke="#fff" strokeWidth="1.2">
        <rect x="5" y="1" width="10" height="14" />
        <path d="M3 3H1v10h2M17 3h2v10h-2" />
      </svg>
    </TaskSlot>
    <TaskSlot w="w-[52px]">
      <svg viewBox="0 0 24 24" width="24" height="24" fill="#dfe3e6">
        <path d="M11 11C4 13 2 8 3 5s7-4 8 1zM13 11c-2-7 3-9 6-8s4 7-1 8zM13 13c7-2 9 3 8 6s-7 4-8-1zM11 13c2 7-3 9-6 8s-4-7 1-8z" />
      </svg>
    </TaskSlot>
    <TaskSlot w="w-[52px]">
      <ELogo color="#e8e8e8" ring="#e8e8e8" />
    </TaskSlot>
    <TaskSlot w="w-[44px]">
      <svg viewBox="0 0 20 20" width="20" height="20" fill="none" stroke="#b8b8b8" strokeWidth="1.5">
        <path d="M16 4a8 8 0 10 2 8M15 7a5 5 0 10 0 5M8 10h5" />
      </svg>
    </TaskSlot>
    <span className="ml-[10px] h-[20px] w-[3px] shrink-0 border-x border-[#3a4448]" />
    <span className="ml-[14px] flex h-full">
      <TaskSlot w="w-[50px]">
        <ELogo color="#0a78d4" />
      </TaskSlot>
    </span>
    <TaskSlot w="w-[50px]">
      <ELogo color="#2a8fe0" ring="#e8b020" />
    </TaskSlot>
    <TaskSlot w="w-[48px]" bar>
      <svg viewBox="0 0 24 24" width="24" height="24">
        <path d="M2 4h8l2 2h10v15H2z" fill="#f7d774" />
        <rect x="9" y="14" width="7" height="7" fill="#2a8fd8" />
      </svg>
    </TaskSlot>
    <TaskSlot w="w-[48px]" bar>
      <svg viewBox="0 0 24 24" width="26" height="26" fill="none" stroke="#2a9be8" strokeWidth="3.5">
        <path d="M18 5a9 9 0 10 3 8h-8" />
      </svg>
    </TaskSlot>
    <span className="ml-[2px] flex h-full">
      <TaskSlot w="w-[48px]" bar active>
        <span className="flex h-[24px] w-[24px] items-center justify-center rounded-[4px] bg-[#0b8af0]">
          <Plus size={18} color="#fff" strokeWidth={2} />
        </span>
      </TaskSlot>
    </span>
    <TaskSlot w="w-[48px]" bar>
      <svg viewBox="0 0 24 24" width="24" height="24">
        <rect x="1" y="1" width="22" height="22" rx="2" fill="#f0a818" />
        <rect x="5" y="5" width="14" height="15" fill="#fbeec8" />
        <path d="M7 9h10M7 12h10M7 15h7" stroke="#999" />
        <path d="M20 2l-8 14" stroke="#c8501e" strokeWidth="2" />
      </svg>
    </TaskSlot>
    <TaskSlot w="w-[50px]" bar>
      <svg viewBox="0 0 24 24" width="26" height="26">
        <circle cx="12" cy="12" r="10" fill="#8ed12f" stroke="#4a8a1a" />
        <path d="M6 12h12M8 9l4-4 4 4M8 15l4 4 4-4" stroke="#fff" strokeWidth="1.8" fill="none" />
      </svg>
    </TaskSlot>
    <span className="ml-[54px] h-[20px] w-[3px] shrink-0 border-x border-[#3a4448]" />
    <span className="ml-[10px] shrink-0 text-[12px] text-[#d8d8d8]">链接</span>
    <ChevronUp size={15} className="ml-[8px] shrink-0" />
    <BatteryCharging size={15} className="ml-[10px] shrink-0" />
    <Wifi size={14} color="#bbb" className="ml-[11px] shrink-0" />
    <Volume1 size={15} color="#ddd" className="ml-[6px] shrink-0" />
    <Keyboard size={21} strokeWidth={1.3} className="ml-[11px] shrink-0" />
    <span className="ml-[12px] shrink-0 text-[13px]">中</span>
    <span className="ml-[12px] flex h-[15px] w-[15px] shrink-0 rotate-[-8deg] items-center justify-center rounded-[3px] bg-[#e8421a] text-[12px] font-bold leading-none">S</span>
    <div className="ml-[17px] flex w-[62px] shrink-0 flex-col items-center font-['Liberation_Sans',sans-serif] text-[12px] leading-[17px] text-[#e8e8e8]">
      <span>12:03</span>
      <span>2018/5/29</span>
    </div>
    <svg viewBox="0 0 16 16" width="16" height="16" className="ml-[17px] shrink-0" fill="none" stroke="#fff" strokeWidth="1.1">
      <path d="M1 1h14v11h-4l-3 3-1-3H1z" />
    </svg>
  </div>
);

/* ---------- overlays ---------- */

const SogouBar = () => (
  <div className="absolute left-[794px] top-[3px] z-20 flex h-[24px] items-center">
    <span className="z-10 flex h-[24px] w-[25px] rotate-[-8deg] items-center justify-center rounded-[4px] bg-[#ee5a1f] font-['Liberation_Sans',sans-serif] text-[24px] font-bold leading-none text-white">
      S
    </span>
    <div className="-ml-[4px] flex h-[24px] w-[183px] items-center gap-[7px] border border-[#bcd] bg-white pl-[11px] text-[#1c6fc0]">
      <span className="text-[14px] font-bold">中</span>
      <span className="ml-[5px] text-[13px] font-bold leading-none">°,</span>
      <Smile size={16} strokeWidth={2} />
      <Mic size={15} strokeWidth={2.5} />
      <Keyboard size={16} fill="#1c6fc0" color="#fff" />
      <User size={15} color="#b8c4d0" fill="#b8c4d0" />
      <Shirt size={15} fill="#1c6fc0" />
      <Wrench size={14} fill="#1c6fc0" />
    </div>
  </div>
);

const ScoreBadge = () => (
  <div className="absolute left-[1011px] -top-[30px] z-20 flex h-[48px] w-[48px] items-end justify-center rounded-full border-[3px] border-[#c8d0c8] bg-[#3fb950] pb-[1px] font-['Liberation_Sans',sans-serif] text-[11px] font-bold text-white shadow-[0_1px_3px_rgba(0,0,0,0.5)]">
    76
  </div>
);

const App: React.FC = () => (
  <div className={`relative flex h-[768px] w-[1366px] flex-col overflow-hidden bg-[#f0f0f0] text-[12px] text-[#111] ${UI_FONT}`}>
    <TitleBar />
    <MenuBar />
    <ToolBar />
    <div className="flex min-h-0 flex-1 pb-[2px]">
      <NavPanel />
      <CtPanel />
      <PropPanel />
    </div>
    <StatusBar />
    <TaskBar />
    <ParamDialog />
    <SogouBar />
    <ScoreBadge />
  </div>
);

export default App;
